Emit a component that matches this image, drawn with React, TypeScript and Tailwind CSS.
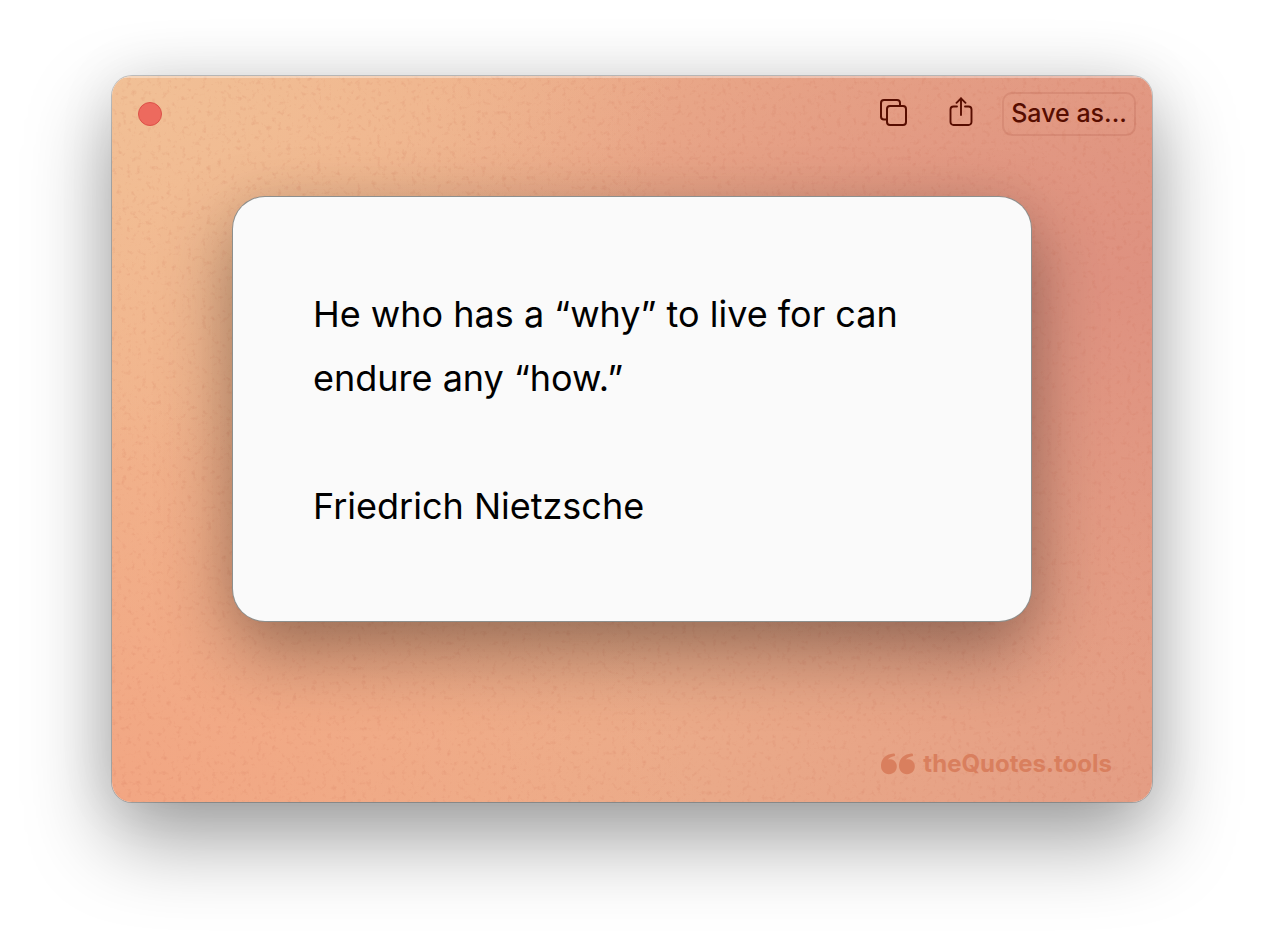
import React from "react";

function CopyIcon() {
  return (
    <svg width="28" height="28" viewBox="0 0 28 28" fill="none" stroke="currentColor" strokeWidth="2" aria-hidden="true">
      <rect x="7" y="7" width="19" height="19" rx="3" />
      <path d="M7 20.500H4A3 3 0 0 1 1 17.500V4A3 3 0 0 1 4 1H17A3 3 0 0 1 20 4V7" />
    </svg>
  );
}

function ShareIcon() {
  return (
    <svg width="24" height="30" viewBox="0 0 24 30" fill="none" stroke="currentColor" strokeWidth="1.9" strokeLinecap="round" aria-hidden="true">
      <path d="M8 9.500H4.500A3 3 0 0 0 1.500 12.500V25A3 3 0 0 0 4.500 28H19.500A3 3 0 0 0 22.500 25V12.500A3 3 0 0 0 19.500 9.500H16" />
      <path d="M12 18V1.500" />
      <path d="M7.500 5.800L12 1.300L16.500 5.800" strokeLinejoin="round" />
    </svg>
  );
}

const quoteGlyph =
  "M12.400 0.500C5 1.200 0 6 0 12.500C0 17.800 3.300 21.200 8 21.200C12.600 21.200 15.800 18 15.800 13.600C15.800 9.300 12.800 6.200 9 6.200C8.200 6.200 7.400 6.300 6.700 6.500C8 5.100 10.200 3.900 12.900 3.300C14.800 2.800 14.300 0.300 12.400 0.500Z";

function QuoteMark() {
  return (
    <svg width="34" height="22" viewBox="0 0 34 22" fill="currentColor" aria-hidden="true">
      <path d={quoteGlyph} />
      <path transform="translate(18 0)" d={quoteGlyph} />
    </svg>
  );
}

function PaperGrain() {
  return (
    <svg className="pointer-events-none h-full w-full opacity-20" aria-hidden="true">
      <filter id="grain" x="0" y="0" width="100%" height="100%" colorInterpolationFilters="sRGB">
        <feTurbulence type="fractalNoise" baseFrequency="0.2" numOctaves="3" seed="4" />
        <feColorMatrix values="0 0 0 0 0.78  0 0 0 0 0.38  0 0 0 0 0.28  2.4 0 0 0 -1.35" />
      </filter>
      <rect width="100%" height="100%" filter="url(#grain)" />
    </svg>
  );
}

export default function App() {
  return (
    <div className="min-h-screen bg-white px-28 pt-19 pb-37 font-['Inter',sans-serif]">
      <main className="relative isolate overflow-clip rounded-[20px] bg-[radial-gradient(ellipse_at_0%_0%,#f1c096_0%,#f1c09600_38%),radial-gradient(ellipse_at_100%_28%,#de9180_0%,#de918000_55%),radial-gradient(ellipse_at_0%_100%,#f2a683_0%,#f2a68300_40%),linear-gradient(100deg,#f2b48c,#ecad8a_50%,#e49d84)] shadow-[0_0_0_1px_rgba(0,0,0,0.2),0_36px_84px_rgba(0,0,0,0.38),0_0_60px_rgba(0,0,0,0.08)]">
        <div className="absolute inset-0 -z-10">
          <PaperGrain />
        </div>
        <header className="flex items-center justify-between border-t-2 border-white/35 pt-3.5 pr-4 pl-[26px]">
          <button type="button" aria-label="Close" className="size-6 rounded-full border border-[#dc5148] bg-[#ed6a5e]" />
          <div className="flex items-center text-[#570d00]">
            <button type="button" aria-label="Copy" className="-mt-0.5 mr-[41px]">
              <CopyIcon />
            </button>
            <button type="button" aria-label="Share" className="-mt-1 mr-[29px]">
              <ShareIcon />
            </button>
            <button type="button" className="h-11 w-[134px] rounded-[10px] border-2 border-[#8a2a1a]/12 pb-0.5 text-[25px] leading-8 font-medium whitespace-nowrap">
              Save as...
            </button>
          </div>
        </header>
        <section className="mx-[121px] mt-[61px] rounded-[32px] bg-[#fafafa] px-20 pt-[85px] pb-[83px] text-[36px] leading-16 text-black shadow-[0_0_0_1px_#8d8f8d,0_30px_72px_rgba(0,0,0,0.36),0_0_50px_rgba(0,0,0,0.04)]">
          <blockquote>He who has a “why” to live for can endure any “how.”</blockquote>
          <p className="mt-16">Friedrich Nietzsche</p>
        </section>
        <footer className="mt-[127px] flex items-center justify-end gap-2 pr-10 pb-[22px] text-[#d97f5e]">
          <QuoteMark />
          <span className="text-2xl font-bold">theQuotes.tools</span>
        </footer>
      </main>
    </div>
  );
}
